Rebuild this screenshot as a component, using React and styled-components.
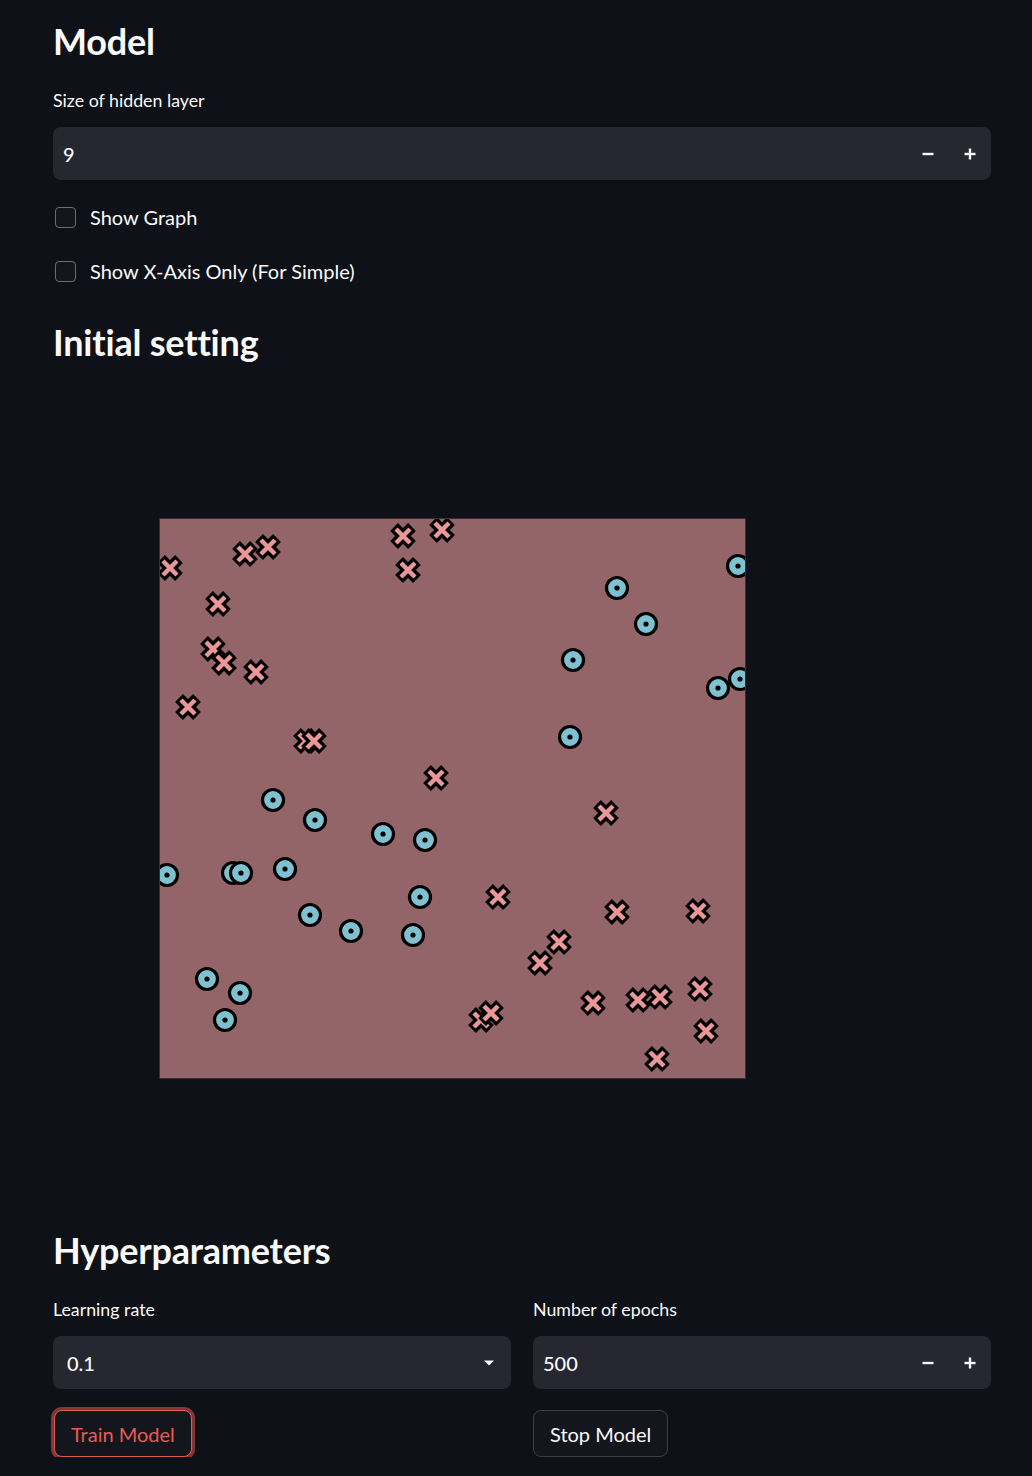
import React from 'react';
import styled, { createGlobalStyle } from 'styled-components';

const crosses = [
  [170, 568], [245, 554], [268, 547], [403, 536], [442, 530], [408, 570],
  [218, 604], [213, 649], [224, 663], [256, 672], [188, 707], [306, 741],
  [314, 741], [436, 778], [606, 813], [498, 897], [617, 912], [698, 911],
  [559, 942], [540, 963], [593, 1003], [638, 1000], [660, 997], [700, 989],
  [706, 1031], [481, 1020], [491, 1013], [657, 1059],
];

const circles = [
  [738, 566], [617, 588], [646, 624], [573, 660], [718, 688], [740, 679],
  [570, 737], [273, 800], [315, 820], [383, 834], [425, 840], [167, 875],
  [233, 873], [241, 873], [285, 869], [420, 897], [310, 915], [351, 931],
  [413, 935], [207, 979], [240, 993], [225, 1020],
];

const PLOT_X = 159;
const PLOT_Y = 518;
const PLOT_W = 587;
const PLOT_H = 561;

function Cross({ x, y }) {
  return (
    <g transform={`translate(${x - PLOT_X} ${y - PLOT_Y})`}>
      <path d="M-9 -9L9 9M9 -9L-9 9" stroke="#000" strokeWidth="11" />
      <path d="M-7 -7L7 7M7 -7L-7 7" stroke="#eb9797" strokeWidth="4.5" />
    </g>
  );
}

function Ring({ x, y }) {
  return (
    <g transform={`translate(${x - PLOT_X} ${y - PLOT_Y})`}>
      <circle r="10.5" fill="#7ec2d2" stroke="#000" strokeWidth="3.2" />
      <circle r="2.6" fill="#000" />
    </g>
  );
}

function Stepper() {
  return (
    <Steps>
      <StepButton>
        <svg width="12" height="12" viewBox="0 0 12 12">
          <rect x="0.5" y="4.8" width="11" height="2.4" fill="#fafafa" />
        </svg>
      </StepButton>
      <StepButton>
        <svg width="12" height="12" viewBox="0 0 12 12">
          <rect x="0.5" y="4.8" width="11" height="2.4" fill="#fafafa" />
          <rect x="4.8" y="0.5" width="2.4" height="11" fill="#fafafa" />
        </svg>
      </StepButton>
    </Steps>
  );
}

export default function App() {
  return (
    <>
      <GlobalStyle />
      <Main>
        <Heading>Model</Heading>
        <Label>Size of hidden layer</Label>
        <InputBox>
          <Value>9</Value>
          <Stepper />
        </InputBox>
        <Checks>
          <CheckRow>
            <Box />
            <span>Show Graph</span>
          </CheckRow>
          <CheckRow>
            <Box />
            <span>Show X-Axis Only (For Simple)</span>
          </CheckRow>
        </Checks>
        <Heading $top={34}>Initial setting</Heading>
        <Figure>
          <svg width={PLOT_W} height={PLOT_H} viewBox={`0 0 ${PLOT_W} ${PLOT_H}`}>
            <rect x="0.5" y="0.5" width={PLOT_W - 1} height={PLOT_H - 1} fill="#946568" stroke="#3b2d33" />
            <svg x="1" y="1" width={PLOT_W - 2} height={PLOT_H - 2} viewBox={`1 1 ${PLOT_W - 2} ${PLOT_H - 2}`} overflow="hidden">
              {crosses.map(([x, y], i) => <Cross key={'c' + i} x={x} y={y} />)}
              {circles.map(([x, y], i) => <Ring key={'r' + i} x={x} y={y} />)}
            </svg>
          </svg>
        </Figure>
        <Heading $top={0}>Hyperparameters</Heading>
        <Columns>
          <Column>
            <Label>Learning rate</Label>
            <InputBox $pad={14}>
              <Value>0.1</Value>
              <Caret>
                <svg width="12" height="8" viewBox="0 0 12 8">
                  <path d="M1 1.5h10L6 6.5z" fill="#fafafa" />
                </svg>
              </Caret>
            </InputBox>
            <Button $primary>Train Model</Button>
          </Column>
          <Column>
            <Label>Number of epochs</Label>
            <InputBox>
              <Value>500</Value>
              <Stepper />
            </InputBox>
            <Button>Stop Model</Button>
          </Column>
        </Columns>
      </Main>
    </>
  );
}

const GlobalStyle = createGlobalStyle`
  html, body {
    margin: 0;
    background: #0e1117;
  }
  body {
    color: #fafafa;
    font-family: Lato, "Noto Sans", sans-serif;
  }
`;

const Main = styled.main`
  width: 938px;
  padding: 19px 41px 0 53px;
  display: flex;
  flex-direction: column;
`;

const Heading = styled.h2`
  margin: ${p => (p.$top ?? 0)}px 0 0;
  font-size: 36px;
  font-weight: 700;
  line-height: 44px;
  letter-spacing: -0.2px;
`;

const Label = styled.div`
  margin-top: 25px;
  font-size: 17.8px;
  line-height: 24px;
`;

const InputBox = styled.div`
  margin-top: 15px;
  height: 53px;
  border-radius: 8px;
  background: #262730;
  display: flex;
  align-items: center;
  padding-left: ${p => p.$pad ?? 10}px;
  padding-right: ${p => (p.$pad ? 16 : 0)}px;
`;

const Value = styled.span`
  flex: 1;
  font-size: 20px;
  font-weight: 500;
`;

const Steps = styled.div`
  display: flex;
  height: 100%;
`;

const StepButton = styled.div`
  width: 42px;
  display: flex;
  align-items: center;
  justify-content: center;
`;

const Caret = styled.div`
  display: flex;
  align-items: center;
`;

const Checks = styled.div`
  margin-top: 22px;
  display: flex;
  flex-direction: column;
  gap: 24px;
`;

const CheckRow = styled.label`
  height: 30px;
  display: flex;
  align-items: center;
  gap: 14px;
  font-size: 20px;
`;

const Box = styled.span`
  margin-left: 2px;
  width: 19px;
  height: 19px;
  border: 1px solid #6b6d76;
  border-radius: 4px;
  background: #13161d;
`;

const Figure = styled.div`
  padding: 154px 0 149px ${PLOT_X - 53}px;
  display: flex;
  svg {
    display: block;
  }
`;

const Columns = styled.div`
  display: grid;
  grid-template-columns: 1fr 1fr;
  gap: 22px;
`;

const Column = styled.div`
  display: flex;
  flex-direction: column;
  align-items: stretch;
`;

const Button = styled.button`
  align-self: flex-start;
  margin-top: 21px;
  height: 47px;
  padding: 0 16px;
  border-radius: 8px;
  background: #13161d;
  font-family: inherit;
  font-size: 20px;
  color: ${p => (p.$primary ? '#ea5b52' : '#fafafa')};
  border: 1px solid ${p => (p.$primary ? '#e05a52' : '#3d3f48')};
  box-shadow: ${p => (p.$primary ? '0 0 0 3px rgba(214, 78, 72, 0.6)' : 'none')};
  margin-left: ${p => (p.$primary ? 1 : 0)}px;
`;
